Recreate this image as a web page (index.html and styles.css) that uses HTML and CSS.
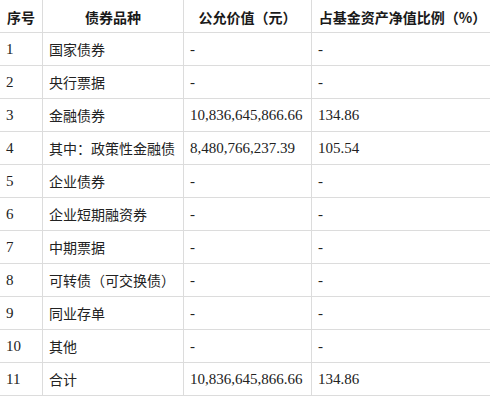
FILE: index.html
```html
<!DOCTYPE html>
<html lang="zh-CN">
<head>
    <meta charset="UTF-8">
    <meta name="viewport" content="width=device-width, initial-scale=1.0">
    <title>债券投资组合</title>
    <link rel="stylesheet" href="styles.css">
</head>
<body>
    <table class="bond-table">
        <thead>
            <tr>
                <th class="col-no">序号</th>
                <th class="col-type">债券品种</th>
                <th class="col-value">公允价值（元）</th>
                <th class="col-ratio">占基金资产净值比例（%）</th>
            </tr>
        </thead>
        <tbody>
            <tr><td class="num">1</td><td>国家债券</td><td class="num">-</td><td class="num">-</td></tr>
            <tr><td class="num">2</td><td>央行票据</td><td class="num">-</td><td class="num">-</td></tr>
            <tr><td class="num">3</td><td>金融债券</td><td class="num">10,836,645,866.66</td><td class="num">134.86</td></tr>
            <tr><td class="num">4</td><td>其中：政策性金融债</td><td class="num">8,480,766,237.39</td><td class="num">105.54</td></tr>
            <tr><td class="num">5</td><td>企业债券</td><td class="num">-</td><td class="num">-</td></tr>
            <tr><td class="num">6</td><td>企业短期融资券</td><td class="num">-</td><td class="num">-</td></tr>
            <tr><td class="num">7</td><td>中期票据</td><td class="num">-</td><td class="num">-</td></tr>
            <tr><td class="num">8</td><td>可转债（可交换债）</td><td class="num">-</td><td class="num">-</td></tr>
            <tr><td class="num">9</td><td>同业存单</td><td class="num">-</td><td class="num">-</td></tr>
            <tr><td class="num">10</td><td>其他</td><td class="num">-</td><td class="num">-</td></tr>
            <tr><td class="num">11</td><td>合计</td><td class="num">10,836,645,866.66</td><td class="num">134.86</td></tr>
        </tbody>
    </table>
</body>
</html>
```

FILE: styles.css
```css
body {
    margin: 0;
    background: #fff;
    color: #222;
    font-family: "Noto Sans CJK SC", sans-serif;
}

.bond-table {
    width: 490px;
    border-collapse: collapse;
    table-layout: fixed;
}

.col-no { width: 42px; }
.col-type { width: 140px; }
.col-value { width: 127px; }
.col-ratio { width: 181px; }

.bond-table th,
.bond-table td {
    height: 32px;
    padding: 0 0 0 6px;
    border: 1px solid #dcdcdc;
    font-size: 14px;
    line-height: 20px;
    white-space: nowrap;
    overflow: hidden;
}

.bond-table th {
    padding: 2px 0 0;
    height: 30px;
    text-align: center;
    font-weight: bold;
    border-top: none;
    color: #1a1a1a;
}

.bond-table tr > :first-child { border-left: none; }
.bond-table tr > :last-child { border-right: none; }

.bond-table td.num {
    font-family: "Liberation Serif", "Noto Sans CJK SC", serif;
    font-size: 15px;
}
```
